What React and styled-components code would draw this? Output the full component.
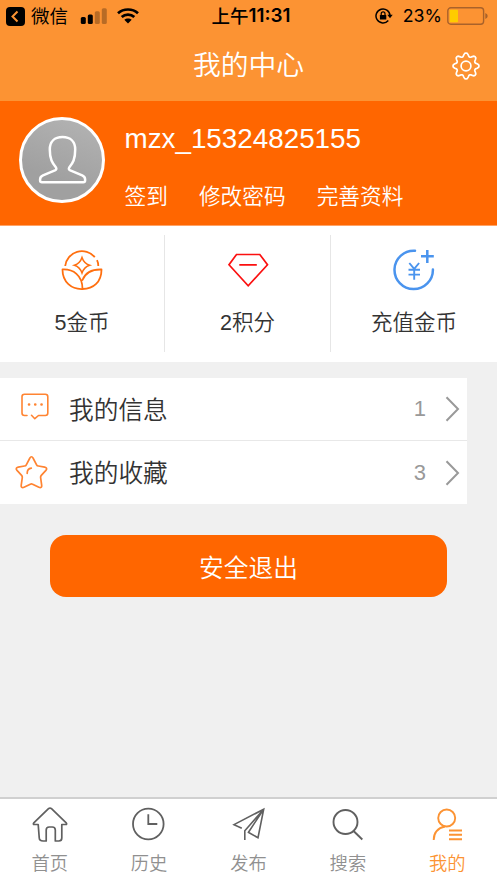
import styled, { createGlobalStyle } from 'styled-components'

const GlobalStyle=createGlobalStyle`
* { box-sizing: border-box; }
body {
  margin: 0;
  background-color: #f0f0f0;
  font-family: "Liberation Sans", "Noto Sans CJK SC", sans-serif;
  font-weight: 350;
}
svg { display: block; flex: none; }
`;
const Page=styled.div`
display: flex;
flex-direction: column;
height: 883px;
overflow: hidden;
`;
const Head=styled.header`
height: 101px;
background-color: #fc9333;
`;
const StatusBar=styled.div`
display: grid;
grid-template-columns: 1fr auto 1fr;
align-items: center;
height: 32px;
padding: 0 8px 0 6px;
color: #000;
font-family: Inter, "Noto Sans CJK SC", sans-serif;
font-size: 18.5px;
line-height: 32px;
font-weight: 400;
`;
const StatusLeft=styled.div`
display: flex;
align-items: center;
`;
const StatusRight=styled(StatusLeft)`
justify-content: flex-end;
`;
const Carrier=styled.span`
margin: 0 12px 0 6px;
`;
const Signals=styled.div`
display: flex;
align-items: center;
gap: 10px;
`;
const Clock=styled.span`
display: flex;
font-size: 18.9px;
font-weight: 600;
margin-left: 7px;
`;
const Noon=styled.span`
font-size: 18.5px;
font-weight: 500;
`;
const Percent=styled.span`
margin: 0 5px 0 10px;
font-size: 17.8px;
`;
const Navbar=styled.nav`
display: grid;
grid-template-columns: 1fr auto 1fr;
align-items: center;
height: 68px;
padding-right: 17px;
padding-left: 17px;
color: white;
`;
const Title=styled.h1`
grid-column: 2;
margin: 0;
font-size: 27.8px;
font-weight: 350;
line-height: 40px;
`;
const Settings=styled.button`
justify-self: end;
padding: 0;
border: 0;
background: none;
color: white;
`;
const Profile=styled.section`
display: flex;
height: 125px;
padding: 16px 20px 0 19px;
border-bottom: 1px solid #ffa366;
background-color: #ff6600;
color: white;
`;
const Avatar=styled.div`
width: 86px;
height: 86px;
border: 3px solid #fff;
border-radius: 50%;
background: linear-gradient(200deg, #b4b4b4, #a0a0a0 70%);
`;
const Info=styled.div`
margin-left: 19.5px;
`;
const UserName=styled.div`
padding-top: 2px;
font-size: 27.8px;
line-height: 40px;
`;
const Links=styled.div`
display: flex;
gap: 31px;
margin-top: 22px;
font-size: 21.7px;
line-height: 32px;
`;
const Stats=styled.section`
display: grid;
grid-template-columns: 165px 166px 166px;
height: 136px;
padding: 9px 0 10px;
background-color: #fff;
`;
const Stat=styled.div`
display: flex;
flex-direction: column;
align-items: center;
padding-top: 14px;
border-right: ${({ $last }) => ($last ? '0' : '1px solid #e6e6e6')};
color: #333;
font-size: 21.5px;
line-height: 32px;
`;
const StatLabel=styled.span`
margin-top: 16px;
`;
const List=styled.section`
width: 467px;
margin-top: 16px;
background-color: #fff;
`;
const Row=styled.div`
display: flex;
align-items: center;
height: ${({ $divided }) => ($divided ? '64px' : '62px')};
padding: 0 7px 0 14px;
border-top: ${({ $divided }) => ($divided ? '1px solid #e8e8e8' : '0')};
`;
const RowLabel=styled.span`
flex: 1;
margin-left: 19px;
padding-top: 3px;
color: #333;
font-size: 24.7px;
line-height: 36px;
`;
const Count=styled.span`
margin-right: 19px;
color: #999;
font-size: 22px;
`;
const Logout=styled.button`
width: 397px;
height: 62px;
margin: 31px 0 0 50px;
padding: 0;
border: 0;
border-radius: 16px;
background-color: #ff6600;
color: white;
font-family: inherit;
font-size: 24.7px;
font-weight: 350;
`;
const TabBar=styled.footer`
display: grid;
grid-template-columns: repeat(5, 1fr);
height: 86px;
margin-top: auto;
border-top: 2px solid #d0d0d0;
background-color: #fff;
`;
const Tab=styled.div`
display: flex;
flex-direction: column;
align-items: center;
padding-top: 7px;
color: ${({ $active }) => ($active ? '#fc9333' : '#606060')};
`;
const TabLabel=styled.span`
margin-top: 7px;
color: ${({ $active }) => ($active ? '#fc9333' : '#909090')};
font-size: 18.3px;
line-height: 26px;
`;

const Line = ({ w, h, sw = 1.6, color = 'currentColor', children }) => (
  <svg width={w} height={h} viewBox={`0 0 ${w} ${h}`} fill='none' stroke={color} strokeWidth={sw} strokeLinecap='round' strokeLinejoin='round'>
    {children}
  </svg>
);

const BackIcon = () => (
  <svg width='19' height='19' viewBox='0 0 19 19'>
    <rect width='19' height='19' rx='4' fill='#000' />
    <path d='M11.5 4.5 6.5 9.5l5 5' fill='none' stroke='#fc9333' strokeWidth='2' />
  </svg>
);
const SignalIcon = () => (
  <svg width='27' height='17' viewBox='0 0 27 17'>
    <rect x='0.800' y='9' width='5' height='7' rx='1.5' />
    <rect x='7.800' y='6.500' width='5' height='9.500' rx='1.5' />
    <rect x='14.800' y='3.300' width='5' height='12.700' rx='1.5' fillOpacity='.27' />
    <rect x='21.800' y='.3' width='5' height='15.700' rx='1.5' fillOpacity='.27' />
  </svg>
);
const WifiIcon = () => (
  <svg width='22' height='16' viewBox='0 0 22 16' fill='none' stroke='#000' strokeWidth='2.7'>
    <path d='M1 5.3C6.5 .2 15.500 .2 21 5.3' />
    <path d='M4.700 9.100c3.500-3.300 9.100-3.300 12.600 0' />
    <path d='M7.300 11.800c2-1.800 5.400-1.800 7.400 0L11 15.500z' fill='#000' stroke='none' />
  </svg>
);
const LockIcon = () => (
  <svg width='18' height='16' viewBox='0 0 18 16' fill='none' stroke='#000' strokeWidth='1.5'>
    <path d='M13.300 12.500A7 7 0 1 1 15 8' />
    <path d='M12.300 6.800h5.400L15 10.200z' fill='#000' stroke='none' />
    <rect x='4.900' y='7' width='6.400' height='4.600' rx='.6' fill='#000' stroke='none' />
    <path d='M6.200 7.300V5.700a1.900 1.900 0 0 1 3.800 0v1.600' strokeWidth='1.200' />
  </svg>
);
const BatteryIcon = () => (
  <svg width='42' height='18' viewBox='0 0 42 18'>
    <rect x='.8' y='.8' width='35.800' height='16.400' rx='3' fill='none' stroke='#a9622a' strokeWidth='1.400' />
    <rect x='2.700' y='2.800' width='8.300' height='12.400' rx='.8' fill='#ffcc00' />
    <path d='M38.300 6q2.400 1 2.400 3t-2.400 3z' fill='#a9622a' />
  </svg>
);

const gear = () => {
  const pts=[];
  for (let i=0; i<64; i++) {
    const a=(i/64)*Math.PI*2-Math.PI/2;
    const c=Math.cos(a*8);
    const r=11.300+1.700*Math.sign(c)*Math.pow(Math.abs(c), 0.6);
    pts.push(`${(14+r*Math.cos(a)).toFixed(2)} ${(14+r*Math.sin(a)).toFixed(2)}`);
  }
  return `M${pts.join('L')}Z`;
};
const GearIcon = () => (
  <Line w={28} h={28} sw={1.7}>
    <path d={gear()} />
    <circle cx='14' cy='14' r='4.900' />
  </Line>
);
const PersonIcon = () => (
  <Line w={80} h={80} sw={2.500} color='#fff'>
    <path d='M40.500 17c-8 0-12.700 4.700-12.700 12.500 0 10 2.500 13.500 6.200 18 .8 1.500.2 2.300-1.100 2.900L21 55.300c-2 .9-2.900 2-2.900 4v1.200c0 1.200.7 1.800 1.900 1.800h41.200c1.200 0 1.900-.6 1.900-1.800v-1.200c0-2-.9-3.100-2.900-4l-11.900-4.900c-1.300-.6-1.900-1.400-1.100-2.900 3.700-4.500 6-8 6-18 0-7.800-4.700-12.500-12.700-12.500z' />
  </Line>
);
const CoinIcon = () => (
  <Line w={42} h={42} sw={1.800} color='#ff6f0f'>
    <path d='M4.200 17A16.800 16.800 0 0 1 33.800 8.200M36 11.200q1.300 2.500 1.300 5.800' strokeLinecap='butt' />
    <path d='M21 8.500q2 6 7.600 7.700-5.600 1.800-7.600 7.800-2-6-7.600-7.800Q19 14.500 21 8.500z' strokeLinejoin='miter' strokeWidth='1.500' />
    <path d='M1.500 20.500c10.500-.5 20 5.500 20 19.500C10.500 40.500 1.500 33 1.500 20.500zM40.500 20.500c-8.500-.3-16 3-19 10.500M40.500 20.500c0 12.500-8 19.500-19 19.500' />
  </Line>
);
const DiamondIcon = () => (
  <Line w={42} h={42} sw={1.700} color='#fb1010'>
    <path d='M9.500 5.500h23.300l7.700 10.300L21.200 36.800 2 15.800zM12.300 15.800h17.500' strokeLinecap='butt' strokeLinejoin='miter' />
  </Line>
);
const RechargeIcon = () => (
  <Line w={42} h={42} sw={2.500} color='#4a94ee'>
    <path d='M22 1.700A19.200 19.200 0 1 0 39.900 20.500' />
    <path d='M34.300 1v13M28 7.300h12.800' strokeLinecap='butt' strokeWidth='2.500' />
    <path d='M16.300 14l4.900 5.800 4.900-5.800M21.200 19.800v11M15.500 20.700h11.500M15.500 25.600h11.500' strokeLinecap='butt' strokeWidth='1.900' />
  </Line>
);
const MessageIcon = () => (
  <Line w={36} h={36} sw={1.600} color='#ff8432'>
    <path d='M13 24.500H10.500a2.500 2.500 0 0 1-2.500-2.500V5.700a2.500 2.500 0 0 1 2.500-2.500h20.800a2.500 2.500 0 0 1 2.500 2.500V22a2.500 2.500 0 0 1-2.500 2.500h-6.800L20.800 27.700 17.500 24.300' />
    <path d='M15 13.500h.1M21.200 13.500h.1M27.500 13.500h.1' strokeWidth='2.600' />
  </Line>
);
const StarIcon = () => (
  <Line w={36} h={36} sw={1.700} color='#ff8432'>
    <path d='M15.900 3c.8-1.700 2.300-1.700 3.100 0l3.600 6.800c.4.800 1 1.100 1.800 1.200l6.300 1.100c2 .4 2.600 1.800 1.200 3.300l-4.600 5c-.6.700-.8 1.300-.7 2.100l1.100 7.800c.3 2-1 2.900-2.800 2l-6.300-3.100c-.8-.4-1.500-.4-2.300 0L10 32.300c-1.800.9-3.100 0-2.800-2l1.100-7.800c.1-.8-.1-1.400-.7-2.100L3 15.400c-1.400-1.500-.8-2.900 1.200-3.300l6.300-1.100c.8-.1 1.400-.4 1.800-1.200z' />
    <path d='M13.200 18.300c0-3 1.600-4.800 4.100-5.100' />
  </Line>
);
const ArrowIcon = () => (
  <Line w={15} h={26} sw={2} color='#999'>
    <path d='M1.500 1.300 13 13 1.500 24.700' strokeLinejoin='miter' strokeLinecap='butt' />
  </Line>
);
const HomeIcon = () => (
  <Line w={38} h={38} sw={1.700}>
    <path d='M7.200 18.500H3.300c-1.100 0-1.200-.9-.5-1.600L17.500 2.700c1-.9 2-.9 3 0L35.200 16.900c.7.700.6 1.600-.5 1.600h-3.900V32c0 2-1 3-3 3h-3.500V24c0-2-1-3-3-3h-3.100c-2 0-3 1-3 3v11h-3c-2.700 0-4-1-4-3.500z' />
  </Line>
);
const ClockIcon = () => (
  <Line w={38} h={38} sw={1.800}>
    <circle cx='18.300' cy='18' r='15.300' />
    <path d='M18.300 8.300V18h9' strokeLinecap='butt' strokeLinejoin='miter' />
  </Line>
);
const PlaneIcon = () => (
  <Line w={38} h={38} sw={1.600}>
    <path d='M12.800 22.300 5 18.600 34.700 3.200 29 31.700 19.700 26.500M34.700 3.200 15.800 24.800V34M34.700 3.200 19 27' strokeLinejoin='miter' strokeLinecap='butt' />
  </Line>
);
const SearchIcon = () => (
  <Line w={38} h={38} sw={1.900}>
    <circle cx='16.500' cy='16' r='12' />
    <path d='M24.300 24.800 33.300 33.500' strokeLinecap='butt' />
  </Line>
);
const MineIcon = () => (
  <Line w={38} h={38} sw={1.900}>
    <circle cx='18.700' cy='12' r='8.500' />
    <path d='M17 20.500C10 22 5.800 26.500 5.700 34M21 24.500h13M21 28.800h13M21 33.300h13' strokeLinecap='butt' />
  </Line>
);

const tabs=[
  { label: '首页', Icon: HomeIcon },
  { label: '历史', Icon: ClockIcon },
  { label: '发布', Icon: PlaneIcon },
  { label: '搜索', Icon: SearchIcon },
  { label: '我的', Icon: MineIcon, active: true },
];

const App = () => {
  return (
    <>
      <GlobalStyle />
      <Page>
        <Head>
          <StatusBar>
            <StatusLeft>
              <BackIcon />
              <Carrier>微信</Carrier>
              <Signals>
                <SignalIcon />
                <WifiIcon />
              </Signals>
            </StatusLeft>
            <Clock><Noon>上午</Noon>11:31</Clock>
            <StatusRight>
              <LockIcon />
              <Percent>23%</Percent>
              <BatteryIcon />
            </StatusRight>
          </StatusBar>
          <Navbar>
            <Title>我的中心</Title>
            <Settings><GearIcon /></Settings>
          </Navbar>
        </Head>
        <Profile>
          <Avatar><PersonIcon /></Avatar>
          <Info>
            <UserName>mzx_15324825155</UserName>
            <Links>
              <span>签到</span>
              <span>修改密码</span>
              <span>完善资料</span>
            </Links>
          </Info>
        </Profile>
        <Stats>
          <Stat><CoinIcon /><StatLabel>5金币</StatLabel></Stat>
          <Stat><DiamondIcon /><StatLabel>2积分</StatLabel></Stat>
          <Stat $last><RechargeIcon /><StatLabel>充值金币</StatLabel></Stat>
        </Stats>
        <List>
          <Row>
            <MessageIcon />
            <RowLabel>我的信息</RowLabel>
            <Count>1</Count>
            <ArrowIcon />
          </Row>
          <Row $divided>
            <StarIcon />
            <RowLabel>我的收藏</RowLabel>
            <Count>3</Count>
            <ArrowIcon />
          </Row>
        </List>
        <Logout>安全退出</Logout>
        <TabBar>
          {tabs.map(({ label, Icon, active }) => (
            <Tab key={label} $active={active}>
              <Icon />
              <TabLabel $active={active}>{label}</TabLabel>
            </Tab>
          ))}
        </TabBar>
      </Page>
    </>
  )
}

export default App
